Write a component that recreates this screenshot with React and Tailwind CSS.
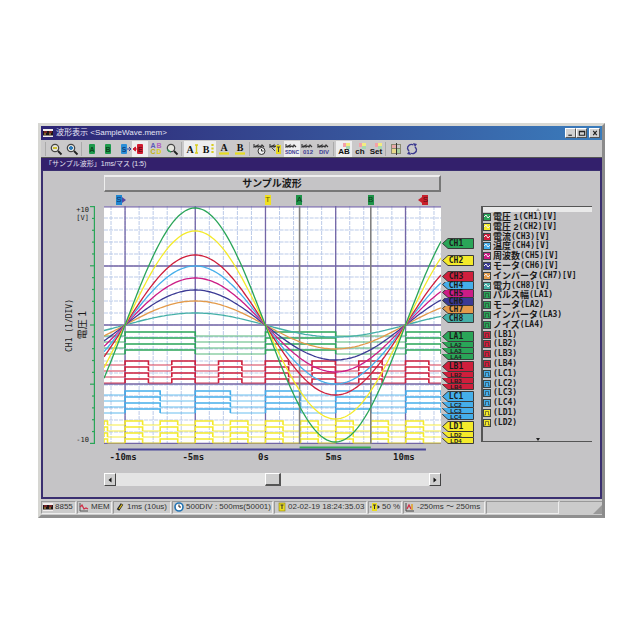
const GREEN = '#2aa558'
const YELLOW = '#f4ea2a'
const RED = '#cf1f3c'
const BLUE = '#45aeea'
const MAGENTA = '#cc1c86'
const NAVY = '#3b3a94'
const ORANGE = '#e39a4a'
const TEAL = '#45b0a8'

const WAVES = [
  { amp: 12, color: TEAL },
  { amp: 24, color: ORANGE },
  { amp: 35, color: NAVY },
  { amp: 47, color: MAGENTA },
  { amp: 59, color: BLUE },
  { amp: 70, color: RED },
  { amp: 94, color: YELLOW },
  { amp: 117, color: GREEN },
]

// period is in plot units, 14 units = 1ms
const LOGIC = [
  { top: 126, period: 140, color: GREEN },
  { top: 155, period: 46.6, color: RED },
  { top: 185, period: 70, color: BLUE },
  { top: 215, period: 35, color: YELLOW },
]

// h is the part of a tag that stays visible below the one before it
const TAG_STACKS = [
  { gap: 'mt-8', tags: [{ name: 'CH1', color: GREEN, h: 11 }] },
  { gap: 'mt-1.5', tags: [{ name: 'CH2', color: YELLOW, h: 11 }] },
  {
    gap: 'mt-[5px]',
    tags: [
      { name: 'CH3', color: RED, h: 11 },
      { name: 'CH4', color: BLUE, h: 8 },
      { name: 'CH5', color: MAGENTA, h: 8 },
      { name: 'CH6', color: NAVY, h: 8 },
      { name: 'CH7', color: ORANGE, h: 8 },
      { name: 'CH8', color: TEAL, h: 9 },
    ],
  },
  {
    gap: 'mt-2',
    tags: [
      { name: 'LA1', color: GREEN, h: 11 },
      { name: 'LA2', color: GREEN, h: 6 },
      { name: 'LA3', color: GREEN, h: 6 },
      { name: 'LA4', color: GREEN, h: 6 },
    ],
  },
  {
    gap: 'mt-px',
    tags: [
      { name: 'LB1', color: RED, h: 11 },
      { name: 'LB2', color: RED, h: 6 },
      { name: 'LB3', color: RED, h: 6 },
      { name: 'LB4', color: RED, h: 6 },
    ],
  },
  {
    gap: 'mt-px',
    tags: [
      { name: 'LC1', color: BLUE, h: 11 },
      { name: 'LC2', color: BLUE, h: 6 },
      { name: 'LC3', color: BLUE, h: 6 },
      { name: 'LC4', color: BLUE, h: 6 },
    ],
  },
  {
    gap: 'mt-px',
    tags: [
      { name: 'LD1', color: YELLOW, h: 11 },
      { name: 'LD2', color: YELLOW, h: 6 },
      { name: 'LD4', color: YELLOW, h: 6 },
    ],
  },
]

const LEGEND = [
  ['電圧 1', '(CH1)[V]', GREEN],
  ['電圧 2', '(CH2)[V]', YELLOW],
  ['電流', '(CH3)[V]', RED],
  ['温度', '(CH4)[V]', BLUE],
  ['周波数', '(CH5)[V]', MAGENTA],
  ['モータ', '(CH6)[V]', NAVY],
  ['インバータ', '(CH7)[V]', ORANGE],
  ['電力', '(CH8)[V]', TEAL],
  ['パルス幅', '(LA1)', GREEN],
  ['モータ', '(LA2)', GREEN],
  ['インバータ', '(LA3)', GREEN],
  ['ノイズ', '(LA4)', GREEN],
  ['', '(LB1)', RED],
  ['', '(LB2)', RED],
  ['', '(LB3)', RED],
  ['', '(LB4)', RED],
  ['', '(LC1)', BLUE],
  ['', '(LC2)', BLUE],
  ['', '(LC3)', BLUE],
  ['', '(LC4)', BLUE],
  ['', '(LD1)', YELLOW],
  ['', '(LD2)', YELLOW],
]

const MARKERS = [
  { letter: 'S', at: 4.4, color: '#1f86d0', text: '#10306a', arrow: 'right' },
  { letter: 'T', at: 48.6, color: '#f0e020', text: '#6a6000' },
  { letter: 'A', at: 58, color: '#1e9348', text: '#0c3a1c' },
  { letter: 'B', at: 79.1, color: '#1e9348', text: '#0c3a1c' },
  { letter: 'S', at: 95.4, color: '#c8202c', text: '#5e0c14', arrow: 'left' },
]

function sinePath(amp) {
  const pts = []
  for (let x = 0; x <= 336; x += 2) {
    const y = 119 - amp * Math.sin(((x - 21) / 139.8) * Math.PI)
    pts.push(`${x},${y.toFixed(1)}`)
  }
  return pts.join(' ')
}

function logicEdges(period) {
  const half = period / 2
  const edges = []
  let k = Math.floor(-21 / half)
  while (21 + k * half < 336) {
    const from = Math.max(0, 21 + k * half)
    const to = Math.min(336, 21 + (k + 1) * half)
    if (to > from) edges.push({ from, to, high: k % 2 === 0 })
    k += 1
  }
  return edges
}

function LogicTrace({ y, period, color }) {
  return logicEdges(period).map(({ from, to, high }) => (
    <g key={from} stroke={color} fill="none">
      {high ? (
        <path d={`M${from} ${y + 4}V${y}H${to}V${y + 4}`} strokeWidth="1.6" />
      ) : (
        <path d={`M${from} ${y + 4}H${to}`} strokeWidth="1.1" opacity="0.8" />
      )}
    </g>
  ))
}

function Plot() {
  const minorX = Array.from({ length: 24 }, (_, i) => 7 + i * 14)
  const minorY = Array.from({ length: 19 }, (_, i) => Math.round((i + 1) * 11.9))
  return (
    <svg viewBox="0 0 336 238" preserveAspectRatio="none" className="block h-[238px] w-full bg-white">
      <g stroke="#bccbe9" strokeWidth="1" strokeDasharray="4 1">
        {minorX.map((x) => <path key={x} d={`M${x} 0V238`} />)}
        {minorY.map((y) => <path key={y} d={`M0 ${y}H336`} />)}
      </g>
      <g stroke="#7466a6" strokeWidth="1.3">
        {[21, 91, 161, 231, 300.6].map((x) => <path key={x} d={`M${x} 0V238`} />)}
        {[0.8, 60, 119, 178, 237.3].map((y) => <path key={y} d={`M0 ${y}H336`} />)}
      </g>
      {LOGIC.map(({ top, period, color }) =>
        [0, 6, 12, 18].map((dy) => <LogicTrace key={top + dy} y={top + dy} period={period} color={color} />)
      )}
      <g stroke="#808080" strokeWidth="1.6">
        <path d="M195 0V238" />
        <path d="M266 0V238" />
      </g>
      <g fill="none" strokeWidth="1.3">
        {WAVES.map(({ amp, color }) => <polyline key={amp} points={sinePath(amp)} stroke={color} />)}
      </g>
    </svg>
  )
}

function Magnifier({ accent, sign }) {
  return (
    <svg viewBox="0 0 16 16" className="size-4">
      <circle cx="7" cy="7" r="3.7" fill="#e4e4de" stroke="#444" strokeWidth="1.2" />
      <path d="M10 10l3.5 3.5" stroke="#222" strokeWidth="1.8" />
      {sign && <path d={sign} stroke={accent} strokeWidth="1.8" />}
      {!sign && <path d="M3.5 8.5a3.7 3.7 0 0 0 3.5 2.2" stroke={accent} strokeWidth="1.5" fill="none" />}
    </svg>
  )
}

function Flag({ letter, color, arrow, text }) {
  return (
    <svg viewBox="0 0 16 16" className="size-4">
      <rect x="5" y="3" width="6" height="10" rx="1" fill={color} />
      <text x="8" y="11" fontSize="7" fontWeight="700" textAnchor="middle" fill={text}>{letter}</text>
      {arrow === 'right' && <path d="M11 8h4M13 6l2 2-2 2" stroke="#2b3f9c" fill="none" />}
      {arrow === 'left' && <path d="M5 8H2M3.5 6L1 8l2.5 2z" stroke={color} fill={color} />}
    </svg>
  )
}

function Letter({ letter, side }) {
  return (
    <svg viewBox="0 0 16 16" className="size-4">
      <text x={side ? 6 : 8} y={side ? 12 : 10} fontSize="10" fontWeight="700" textAnchor="middle" fill="#111" className="font-['Liberation_Serif',serif]">{letter}</text>
      {side === 'solid' && <path d="M12.5 4v8M11 4h3M11 12h3" stroke="#d8cc20" strokeWidth="1.4" />}
      {side === 'dots' && <path d="M12.5 3v9" stroke="#d8cc20" strokeWidth="2.2" strokeDasharray="2 1.5" />}
      {!side && <path d="M3 12.5h10" stroke="#e6dc20" strokeWidth="2.2" />}
    </svg>
  )
}

function Samples({ children }) {
  return (
    <svg viewBox="0 0 16 16" className="size-4">
      <path d="M2 3v3l2-1v1l2-2v2l2-1 1 1 1-2 2 2" stroke="#333" strokeWidth="1.1" fill="none" />
      {children}
    </svg>
  )
}

function NumberText({ size = 6, children }) {
  return <text x="8" y="13" fontSize={size} fontWeight="700" textAnchor="middle" fill="#403c94">{children}</text>
}

function Tagged({ children }) {
  return (
    <svg viewBox="0 0 16 16" className="size-4">
      <rect x="7" y="2" width="3" height="4" fill="#f2a0a8" />
      <rect x="10" y="2" width="4" height="4" fill="#f4ec80" />
      <rect x="10" y="5" width="4" height="3" fill="#a8d8b0" />
      <text x="8" y="13" fontSize="8" fontWeight="700" textAnchor="middle" fill="#111">{children}</text>
    </svg>
  )
}

const TOOL_GROUPS = [
  [
    { label: '縮小', icon: <Magnifier accent="#c8b820" sign="M5 7h4" /> },
    { label: '拡大', icon: <Magnifier accent="#2878b8" sign="M5 7h4M7 5v4" /> },
  ],
  [
    { label: 'Aカーソル', icon: <Flag letter="A" color="#1e9a4c" text="#0b4420" /> },
    { label: 'Bカーソル', icon: <Flag letter="B" color="#1e9a4c" text="#0b4420" /> },
    { label: '開始位置', icon: <Flag letter="S" color="#2a8fd8" text="#12407a" arrow="right" /> },
    { label: '終了位置', pressed: true, icon: <Flag letter="E" color="#d01c30" text="#6a0c18" arrow="left" /> },
    {
      label: '全カーソル',
      icon: (
        <svg viewBox="0 0 16 16" className="size-4">
          <g fontSize="7" fontWeight="700" textAnchor="middle">
            <text x="5" y="7" fill="#5858b8">A</text>
            <text x="11" y="7" fill="#b060c0">B</text>
            <text x="5" y="13" fill="#c0b010">C</text>
            <text x="11" y="13" fill="#e0d020">D</text>
          </g>
        </svg>
      ),
    },
    { label: '検索', icon: <Magnifier accent="#2a9a58" /> },
  ],
  [
    { label: 'A表示', pressed: true, icon: <Letter letter="A" side="solid" /> },
    { label: 'B表示', pressed: true, icon: <Letter letter="B" side="dots" /> },
    { label: 'A移動', icon: <Letter letter="A" /> },
    { label: 'B移動', icon: <Letter letter="B" /> },
  ],
  [
    {
      label: '時間',
      icon: (
        <Samples>
          <circle cx="9.5" cy="10" r="3.5" fill="#eee" stroke="#333" />
          <path d="M9.5 8v2h2" stroke="#333" fill="none" />
        </Samples>
      ),
    },
    {
      label: 'トリガ',
      icon: (
        <Samples>
          <rect x="8" y="4" width="5" height="9" fill="#e8d820" />
          <path d="M9 6h3M10.5 6v5M4 7l3 3" stroke="#444" fill="none" />
        </Samples>
      ),
    },
    { label: '絶対値', pressed: true, icon: <Samples><NumberText size={5}>SDNC</NumberText></Samples> },
    { label: '番号', icon: <Samples><NumberText>012</NumberText></Samples> },
    { label: 'DIV', icon: <Samples><NumberText>DIV</NumberText></Samples> },
  ],
  [
    { label: 'AB', pressed: true, icon: <Tagged>AB</Tagged> },
    { label: 'ch', icon: <Tagged>ch</Tagged> },
    { label: 'Set', icon: <Tagged>Set</Tagged> },
  ],
  [
    {
      label: '分割',
      icon: (
        <svg viewBox="0 0 16 16" className="size-4">
          <path d="M4 4h4v4H4z" fill="#e8a8a8" />
          <path d="M9 8h4v4H9z" fill="#a8d0a0" />
          <path d="M4 8h4v4H4z" fill="#e8d88a" />
          <path d="M3.5 3v10M12.5 3v10M3 3.5h10M3 7.5h10M3 12.5h10" stroke="#8a8a72" fill="none" />
          <path d="M8.5 2v12" stroke="#333" />
        </svg>
      ),
    },
    {
      label: '更新',
      icon: (
        <svg viewBox="0 0 16 16" className="size-4" stroke="#3c3a90" fill="none" strokeWidth="1.3">
          <path d="M3.5 8a4 4 0 0 1 6-4M12.5 8a4 4 0 0 1-6 4" />
          <path d="M9 2l4 1-2 3zM7 14l-4-1 2-3z" fill="#3c3a90" stroke="none" />
          <path d="M12.5 8l-1.5-2M3.5 8L5 10" />
        </svg>
      ),
    },
  ],
]

function AppIcon() {
  return (
    <svg viewBox="0 0 10 8" className="h-2 w-2.5 shrink-0">
      <rect width="10" height="8" fill="#f2eeee" />
      <rect y="2" width="10" height="4.5" fill="#1c1418" />
      <path d="M1 3h3M6 3h3" stroke="#d03030" />
      <path d="M1 5h2M6 5h2" stroke="#e0b040" />
    </svg>
  )
}

function TitleBar() {
  return (
    <header className="flex h-3.5 items-center bg-linear-to-r from-[#2d2474] to-[#3a7cbc] pr-0.5 pl-0.5">
      <AppIcon />
      <h1 className="ml-[3px] flex-1 text-[8px] leading-3 whitespace-nowrap text-[#e4e4f4]">波形表示 &lt;SampleWave.mem&gt;</h1>
      <div className="flex">
        {[
          ['最小化', 'M2 7h4'],
          ['最大化', 'M2 2.5h6v4.5h-6zM2 3h6'],
          ['閉じる', 'M3 2l4 5M7 2l-4 5'],
        ].map(([label, d]) => (
          <button
            key={label}
            aria-label={label}
            className="flex h-2.5 w-[11px] items-center justify-center border border-t-white border-r-[#555] border-b-[#555] border-l-white bg-[#d2d2d2] last:ml-0.5"
          >
            <svg viewBox="0 0 10 9" className="h-2 w-2.5 shrink-0"><path d={d} stroke="#222" strokeWidth="1.3" fill="none" /></svg>
          </button>
        ))}
      </div>
    </header>
  )
}

function Toolbar() {
  return (
    <div role="toolbar" className="flex h-[17px] items-center bg-[#cac9ca] pl-[3px]">
      {TOOL_GROUPS.map((group, i) => (
        <div key={i} className="flex items-center">
          <span className="mr-0.5 ml-px h-3.5 w-px border-l border-[#aaa] bg-[#eee]" />
          {group.map(({ label, icon, pressed }) => (
            <button
              key={label}
              aria-label={label}
              aria-pressed={!!pressed}
              className={`size-4 ${pressed ? 'bg-[#eeeeef]' : ''}`}
            >
              {icon}
            </button>
          ))}
        </div>
      ))}
    </div>
  )
}

function YAxis() {
  return (
    <div className="flex w-[61px] shrink-0 justify-end pt-[35px] pr-[9px] font-['DejaVu_Sans_Mono',monospace]">
      <div className="flex h-[238px] items-center text-[8px] leading-3">
        <span className="rotate-180 whitespace-nowrap [writing-mode:vertical-rl]">CH1 (1/DIV)</span>
      </div>
      <div className="flex h-[238px] flex-col items-end justify-between pr-px text-[7px] leading-2">
        <div className="text-right">+10<br />[V]</div>
        <span className="mb-2 rotate-180 font-['Liberation_Sans','Noto_Sans_CJK_JP',sans-serif] text-[10px] leading-3 whitespace-nowrap [text-orientation:sideways] [writing-mode:vertical-rl]">電圧 1</span>
        <span>-10</span>
      </div>
      <svg viewBox="0 0 5 238" className="h-[238px] w-[5px] shrink-0" stroke={GREEN} strokeWidth="1.2">
        <path d="M4.4 0V238" />
        {Array.from({ length: 21 }, (_, i) => (
          <path key={i} d={`M${i % 5 === 0 ? 0 : 2} ${0.6 + i * 11.84}H4.4`} />
        ))}
      </svg>
    </div>
  )
}

function Marker({ letter, at, color, text, arrow }) {
  return (
    <div className="absolute top-[3px] w-1.5 -translate-x-1/2" style={{ left: `${at}%` }}>
      <span className="block h-2.5 text-center text-[8px] leading-2.5" style={{ background: color, color: text }}>{letter}</span>
      {arrow && (
        <svg viewBox="0 0 4 6" className={`absolute top-0.5 h-1.5 w-1 ${arrow === 'right' ? 'left-full' : 'right-full rotate-180'}`}>
          <path d="M0 0L4 3L0 6z" fill={arrow === 'right' ? '#5548a0' : color} />
        </svg>
      )}
    </div>
  )
}

function ScrollButton({ label, d }) {
  return (
    <button aria-label={label} className="flex h-[13px] w-3 items-center justify-center border border-t-white border-r-[#444] border-b-[#444] border-l-white bg-[#cfcfcf]">
      <svg viewBox="0 0 6 6" className="size-1.5"><path d={d} fill="#111" /></svg>
    </button>
  )
}

function Chart() {
  return (
    <div className="min-w-0 flex-1 pt-1">
      <h2 className="h-[17px] border-t-2 border-r-2 border-b-2 border-l border-t-[#eee] border-r-[#777] border-b-[#777] border-l-[#eee] text-center text-[10px] leading-[13px] font-bold">サンプル波形</h2>
      <div className="relative h-3.5">
        {MARKERS.map((m) => <Marker key={m.at} {...m} />)}
      </div>
      <Plot />
      <svg viewBox="0 0 336 8" preserveAspectRatio="none" className="block h-2 w-full">
        <path d="M195 3.5H266" stroke="#3bab55" strokeWidth="2" />
        <path d="M14 5.5H321" stroke="#4a4797" strokeWidth="2" />
      </svg>
      <div className="mr-0.5 -ml-4 grid grid-cols-5 text-center font-['DejaVu_Sans_Mono',monospace] text-[9px] leading-[11px] font-bold">
        {['-10ms', '-5ms', '0s', '5ms', '10ms'].map((t) => <span key={t}>{t}</span>)}
      </div>
      <div className="mt-2.5 flex bg-[#e4e4e4]">
        <ScrollButton label="左へ" d="M4.5 0.5V5.5L1.5 3z" />
        <div className="flex flex-1 justify-center">
          <div className="w-4 border border-t-white border-r-2 border-r-[#555] border-b-2 border-b-[#555] border-l-white bg-[#cfcfcf]" />
        </div>
        <ScrollButton label="右へ" d="M1.5 0.5V5.5L4.5 3z" />
      </div>
    </div>
  )
}

function ChannelTag({ name, color, h }) {
  return (
    <button className="relative flex w-full items-center justify-center pr-1" style={{ height: h }}>
      <span className="absolute inset-0 overflow-hidden">
        <svg viewBox="0 0 32 11" className="absolute bottom-0 left-0 h-[11px] w-full">
          <path d="M0.5 5.5L6 0.5H31.5V10.5H6z" fill={color} stroke="#3b3b3b" />
        </svg>
      </span>
      <span className={`relative font-bold ${h > 6 ? "font-['DejaVu_Sans_Mono',monospace] text-[8px] leading-2" : 'text-[6px] leading-1.5'}`}>{name}</span>
    </button>
  )
}

function ChannelTags() {
  return (
    <div className="mt-[35px] ml-px h-[238px] w-8 shrink-0">
      {TAG_STACKS.map(({ gap, tags }) => (
        <div key={tags[0].name} className={`flex flex-col ${gap}`}>
          {tags.map((tag) => <ChannelTag key={tag.name} {...tag} />)}
        </div>
      ))}
    </div>
  )
}

function Legend() {
  return (
    <aside className="mt-[35px] mr-2 ml-[7px] flex h-[236px] w-[111px] shrink-0 flex-col border-t border-b border-l-2 border-[#555]">
      <button aria-label="上へ" className="flex h-[5px] shrink-0 items-center justify-center bg-[#e9e9e9]">
        <svg viewBox="0 0 4 3" className="h-[3px] w-1"><path d="M2 0L4 3H0z" fill="#aaa" /></svg>
      </button>
      <ul className="mt-px flex h-[214px] flex-col justify-between">
        {LEGEND.map(([name, code, color]) => (
          <li key={code} className="flex h-2 items-center font-bold whitespace-nowrap">
            <svg viewBox="0 0 8 8" className="mr-0.5 size-2 shrink-0">
              <rect x="0.5" y="0.5" width="7" height="7" fill={color} stroke="#3a4444" />
              {code.startsWith('(C') ? (
                <path d="M1 4l2-2 2 3 2-2" stroke="#f0f0f0" fill="none" />
              ) : (
                <path d="M1 6h1.5V2.5h3V6H7" stroke="#333" strokeOpacity="0.6" fill="none" />
              )}
            </svg>
            {name && <span className="text-[9px] leading-2">{name}</span>}
            <span className="font-['DejaVu_Sans_Mono',monospace] text-[8px] leading-2">{code}</span>
          </li>
        ))}
      </ul>
      <button aria-label="下へ" className="mt-auto flex h-1 items-center justify-center">
        <svg viewBox="0 0 4 3" className="h-[3px] w-1"><path d="M0 0H4L2 3z" fill="#222" /></svg>
      </button>
    </aside>
  )
}

const STATUS = [
  { text: '8855', box: 'w-[35px]', icon: <AppIcon /> },
  {
    text: 'MEM',
    box: 'w-[35px]',
    icon: <svg viewBox="0 0 10 10" className="size-2.5 shrink-0"><path d="M1 1v8h8" stroke="#555" fill="none" /><path d="M1 5l2-2 2 4 2-1 2 1" stroke="#d03048" strokeWidth="1.3" fill="none" /></svg>,
  },
  {
    text: '1ms (10us)',
    box: 'w-[58px]',
    icon: <svg viewBox="0 0 10 10" className="size-2.5 shrink-0"><path d="M3 8L7 2" stroke="#222" strokeWidth="3" /><path d="M4 7L7 2.5" stroke="#e0c020" strokeWidth="1.2" /></svg>,
  },
  {
    text: '500DIV : 500ms(50001)',
    box: 'w-[101px]',
    icon: <svg viewBox="0 0 10 10" className="size-2.5 shrink-0"><circle cx="5" cy="5" r="4" fill="#fff" stroke="#2474b4" strokeWidth="1.6" /><path d="M5 2.5V5h2" stroke="#222" fill="none" /></svg>,
  },
  {
    text: '02-02-19 18:24:35.03',
    box: 'w-[93px]',
    icon: <svg viewBox="0 0 10 10" className="size-2.5 shrink-0"><rect x="3" y="1" width="6" height="8" fill="#eadc20" stroke="#8a8010" strokeWidth="0.6" /><path d="M4.5 3h3M6 3v4" stroke="#333" /></svg>,
  },
  {
    text: '50 %',
    box: 'w-[34px]',
    icon: <svg viewBox="0 0 10 10" className="size-2.5 shrink-0"><rect x="2" y="1" width="5" height="8" fill="#eadc20" /><path d="M3 3h3M4.5 3v4M0 5h1.5" stroke="#333" /><path d="M7.5 3l2.5 2-2.5 2z" fill="#222" /></svg>,
  },
  {
    text: '-250ms ～ 250ms',
    box: 'w-[82px]',
    icon: <svg viewBox="0 0 10 10" className="size-2.5 shrink-0"><path d="M1 1v8h8" stroke="#444" fill="none" /><path d="M2 7l2-4 2 4" stroke="#d03048" fill="none" strokeWidth="1.3" /><path d="M7 2v6" stroke="#e0a020" strokeWidth="1.5" /></svg>,
  },
]

function StatusBar() {
  return (
    <footer className="flex h-4 items-center gap-px bg-[#cbcbcb] text-[8px]">
      {STATUS.map(({ text, icon, box }) => (
        <div key={text} className={`flex h-[13px] shrink-0 items-center gap-0.5 border border-t-[#999] border-r-[#eee] border-b-[#eee] border-l-[#999] pl-px whitespace-nowrap text-[#333] ${box}`}>
          {icon}
          <span>{text}</span>
        </div>
      ))}
      <div className="h-[13px] w-[73px] shrink-0 border border-t-[#999] border-r-[#eee] border-b-[#eee] border-l-[#999]" />
      <div className="flex h-[13px] flex-1 items-end justify-end border-t border-[#999]">
        <svg viewBox="0 0 9 9" className="size-[9px]"><path d="M0 9L9 0V9z" fill="#999" /></svg>
      </div>
    </footer>
  )
}

export default function App() {
  return (
    <main className="min-h-screen bg-white pt-[123px] pr-[35px] pb-8 pl-[38px] font-['Liberation_Sans','Noto_Sans_CJK_JP',sans-serif] text-[#1a1a1a]">
      <div className="border-3 border-t-[#d9d9d4] border-r-[#8b8b8b] border-b-[#8f8f8f] border-l-[#d6d6d2] bg-[#c5c4c6]">
        <TitleBar />
        <Toolbar />
        <p className="h-[13px] border-t border-[#555] bg-[#33206c] pl-1 text-[7px] leading-3 whitespace-nowrap text-[#e4e0f0]">「サンプル波形」1ms/マス (1:5)</p>
        <section className="flex h-[329px] border-x-2 border-t border-b-2 border-[#3a2f70] bg-[#c5c4c6]">
          <YAxis />
          <Chart />
          <ChannelTags />
          <Legend />
        </section>
        <StatusBar />
      </div>
    </main>
  )
}
